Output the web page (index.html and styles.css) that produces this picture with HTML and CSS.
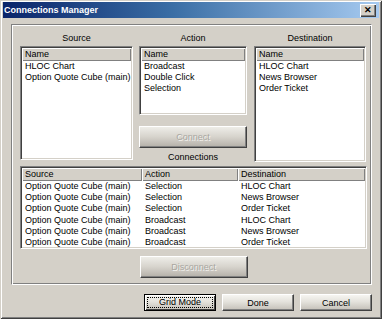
FILE: index.html
```html
<!DOCTYPE html>
<html lang="en">
<head>
  <meta charset="UTF-8" />
  <title>Connections Manager</title>
  <link rel="stylesheet" href="styles.css">
</head>
<body>
  <div class="window">
    <div class="titlebar">
      <span class="title">Connections Manager</span>
      <span class="close">&#x2715;</span>
    </div>

    <div class="group">
      <div class="top">
        <div class="col col-source">
          <div class="label">Source</div>
          <div class="list list-source">
            <div class="head"><span>Name</span></div>
            <div class="row">HLOC Chart</div>
            <div class="row">Option Quote Cube (main)</div>
          </div>
        </div>

        <div class="col col-action">
          <div class="label">Action</div>
          <div class="list list-action">
            <div class="head"><span>Name</span></div>
            <div class="row">Broadcast</div>
            <div class="row">Double Click</div>
            <div class="row">Selection</div>
          </div>
          <button class="btn btn-big" disabled>Connect</button>
          <div class="label">Connections</div>
        </div>

        <div class="col col-dest">
          <div class="label">Destination</div>
          <div class="list list-dest">
            <div class="head"><span>Name</span></div>
            <div class="row">HLOC Chart</div>
            <div class="row">News Browser</div>
            <div class="row">Order Ticket</div>
          </div>
        </div>
      </div>

      <!-- connections table -->
      <div class="list list-table">
        <div class="head grid">
          <span>Source</span><span>Action</span><span>Destination</span>
        </div>
        <div class="row grid"><span>Option Quote Cube (main)</span><span>Selection</span><span>HLOC Chart</span></div>
        <div class="row grid"><span>Option Quote Cube (main)</span><span>Selection</span><span>News Browser</span></div>
        <div class="row grid"><span>Option Quote Cube (main)</span><span>Selection</span><span>Order Ticket</span></div>
        <div class="row grid"><span>Option Quote Cube (main)</span><span>Broadcast</span><span>HLOC Chart</span></div>
        <div class="row grid"><span>Option Quote Cube (main)</span><span>Broadcast</span><span>News Browser</span></div>
        <div class="row grid"><span>Option Quote Cube (main)</span><span>Broadcast</span><span>Order Ticket</span></div>
      </div>

      <div class="center">
        <button class="btn btn-big" disabled>Disconnect</button>
      </div>
    </div>

    <div class="buttons">
      <button class="btn btn-small focused"><span>Grid Mode</span></button>
      <button class="btn btn-small">Done</button>
      <button class="btn btn-small">Cancel</button>
    </div>
  </div>
</body>
</html>
```

FILE: styles.css
```css
/* ===== Base ===== */
* {
  margin: 0;
  padding: 0;
  box-sizing: border-box;
}
html, body {
  width: 382px;
  height: 319px;
  overflow: hidden;
  background: #d4d0c8;
  font-family: "Liberation Sans", Arial, sans-serif;
  font-size: 9px;
  color: #000;
}

/* ===== Window frame ===== */
.window {
  width: 382px;
  height: 319px;
  padding: 2px 3px 3px 3px;
  background: #d4d0c8;
  box-shadow: inset 1px 1px #d4d0c8, inset -1px -1px #404040,
              inset 2px 2px #fff, inset -2px -2px #808080;
}
.titlebar {
  height: 16px;
  display: flex;
  align-items: center;
  justify-content: space-between;
  padding: 0 3px 0 1px;
  background: linear-gradient(to right, #0a246a 0%, #3a6ea5 45%, #a6caf0 100%);
}
.title {
  color: #fff;
  font-weight: bold;
  font-size: 9px;
}
.close {
  width: 16px;
  height: 13px;
  background: #d4d0c8;
  font-size: 9px;
  font-weight: bold;
  line-height: 13px;
  text-align: center;
  box-shadow: inset 1px 1px #fff, inset -1px -1px #404040, inset -2px -2px #808080;
}

/* ===== Group box ===== */
.group {
  margin: 6px 7px 0 8px;
  height: 261px;
  padding: 7px 4px 0 8px;
  border: 1px solid;
  border-color: #808080 #fff #fff #808080;
  box-shadow: inset 1px 1px #fff, inset -1px -1px #808080;
}
.top {
  display: flex;
  gap: 6px;
  height: 134px;
}
.col {
  display: flex;
  flex-direction: column;
}
.col-source { width: 113px; }
.col-action { width: 108px; }
.col-dest { width: 112px; margin-left: 1px; }
.label {
  height: 13px;
  line-height: 12px;
  text-align: center;
  margin-bottom: 1px;
}
.col-action .label:last-child {
  margin-top: 3px;
}

/* ===== Lists ===== */
.list {
  background: #fff;
  border: 1px solid;
  border-color: #808080 #fff #fff #808080;
  box-shadow: inset 1px 1px #404040, inset -1px -1px #d4d0c8;
  padding: 1px;
  overflow: hidden;
}
.list-source { height: 114px; }
.list-action { height: 69px; }
.list-dest { height: 116px; }
.list-table {
  height: 83px;
  margin-top: 0;
}
.head {
  height: 13px;
  line-height: 13px;
  background: #d4d0c8;
  box-shadow: inset 1px 1px #fff, inset -1px -1px #808080;
}
.head span,
.row {
  padding-left: 3px;
}
.row {
  height: 11.2px;
  line-height: 11px;
  white-space: nowrap;
}
.grid {
  display: grid;
  grid-template-columns: 120px 96px 1fr;
}
.grid span {
  padding-left: 3px;
  white-space: nowrap;
}
.head.grid span {
  box-shadow: inset 1px 1px #fff, inset -1px -1px #808080;
}
.row.grid {
  padding-left: 0;
}

/* ===== Buttons ===== */
.btn {
  font-family: inherit;
  font-size: 9px;
  color: #000;
  border: 1px solid;
  border-color: #fff #404040 #404040 #fff;
  box-shadow: inset -1px -1px #808080;
  background: linear-gradient(#f6f5f1 0%, #e4e2dc 45%, #c4c0b8 100%);
}
.btn-big {
  width: 108px;
  height: 22px;
  margin-top: 11px;
  color: #a8a6a0;
  text-shadow: 1px 1px #f4f3ef;
  background: linear-gradient(#eeede8 0%, #d6d3cc 50%, #b4b0a8 100%);
}
.center {
  display: flex;
  justify-content: center;
  padding-left: 0;
}
.center .btn-big {
  margin-top: 7px;
}
.buttons {
  display: flex;
  justify-content: flex-end;
  gap: 6px;
  margin-top: 9px;
  padding-right: 7px;
}
.btn-small {
  width: 72px;
  height: 17px;
}
.btn-small.focused {
  border: 1px solid #000;
  box-shadow: inset 1px 1px #fff, inset -1px -1px #404040;
  padding: 2px;
}
.btn-small.focused span {
  display: block;
  height: 100%;
  line-height: 10px;
  outline: 1px dotted #000;
  outline-offset: -1px;
}
```
